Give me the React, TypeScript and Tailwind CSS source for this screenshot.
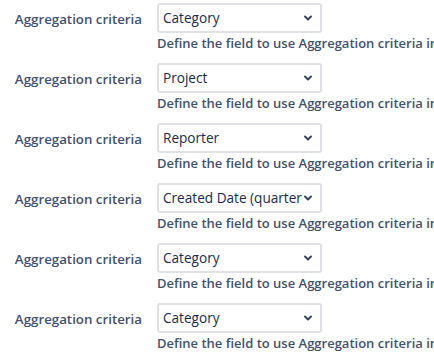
import { ChevronDown } from 'lucide-react'

const rows = ['Category', 'Project', 'Reporter', 'Created Date (quarter)', 'Category', 'Category']

export default function App() {
  return (
    <div className="w-[434px] h-[356px] overflow-hidden bg-white pt-[3px] font-['Open_Sans',sans-serif]">
      {rows.map((value, i) => (
        <div key={i} className="flex h-[60px]">
          <div className="w-[142px] shrink-0 pt-[7px] text-right text-[13.3px] font-semibold text-[#42526e]">
            Aggregation criteria
          </div>
          <div className="ml-[15px] flex flex-col">
            <div className="flex h-[30px] w-[165px] items-center rounded-[3px] border-2 border-[#dfe1e6] bg-white pl-[4px] pr-[6px]">
              <span className="flex-1 overflow-hidden whitespace-nowrap text-[13.6px] text-[#172b4d]">{value}</span>
              <ChevronDown size={12} strokeWidth={4} className="shrink-0 text-[#344563]" />
            </div>
            <div className="mt-[1px] whitespace-nowrap text-[13px] font-semibold text-[#42526e]">
              Define the field to use Aggregation criteria in
            </div>
          </div>
        </div>
      ))}
    </div>
  )
}
